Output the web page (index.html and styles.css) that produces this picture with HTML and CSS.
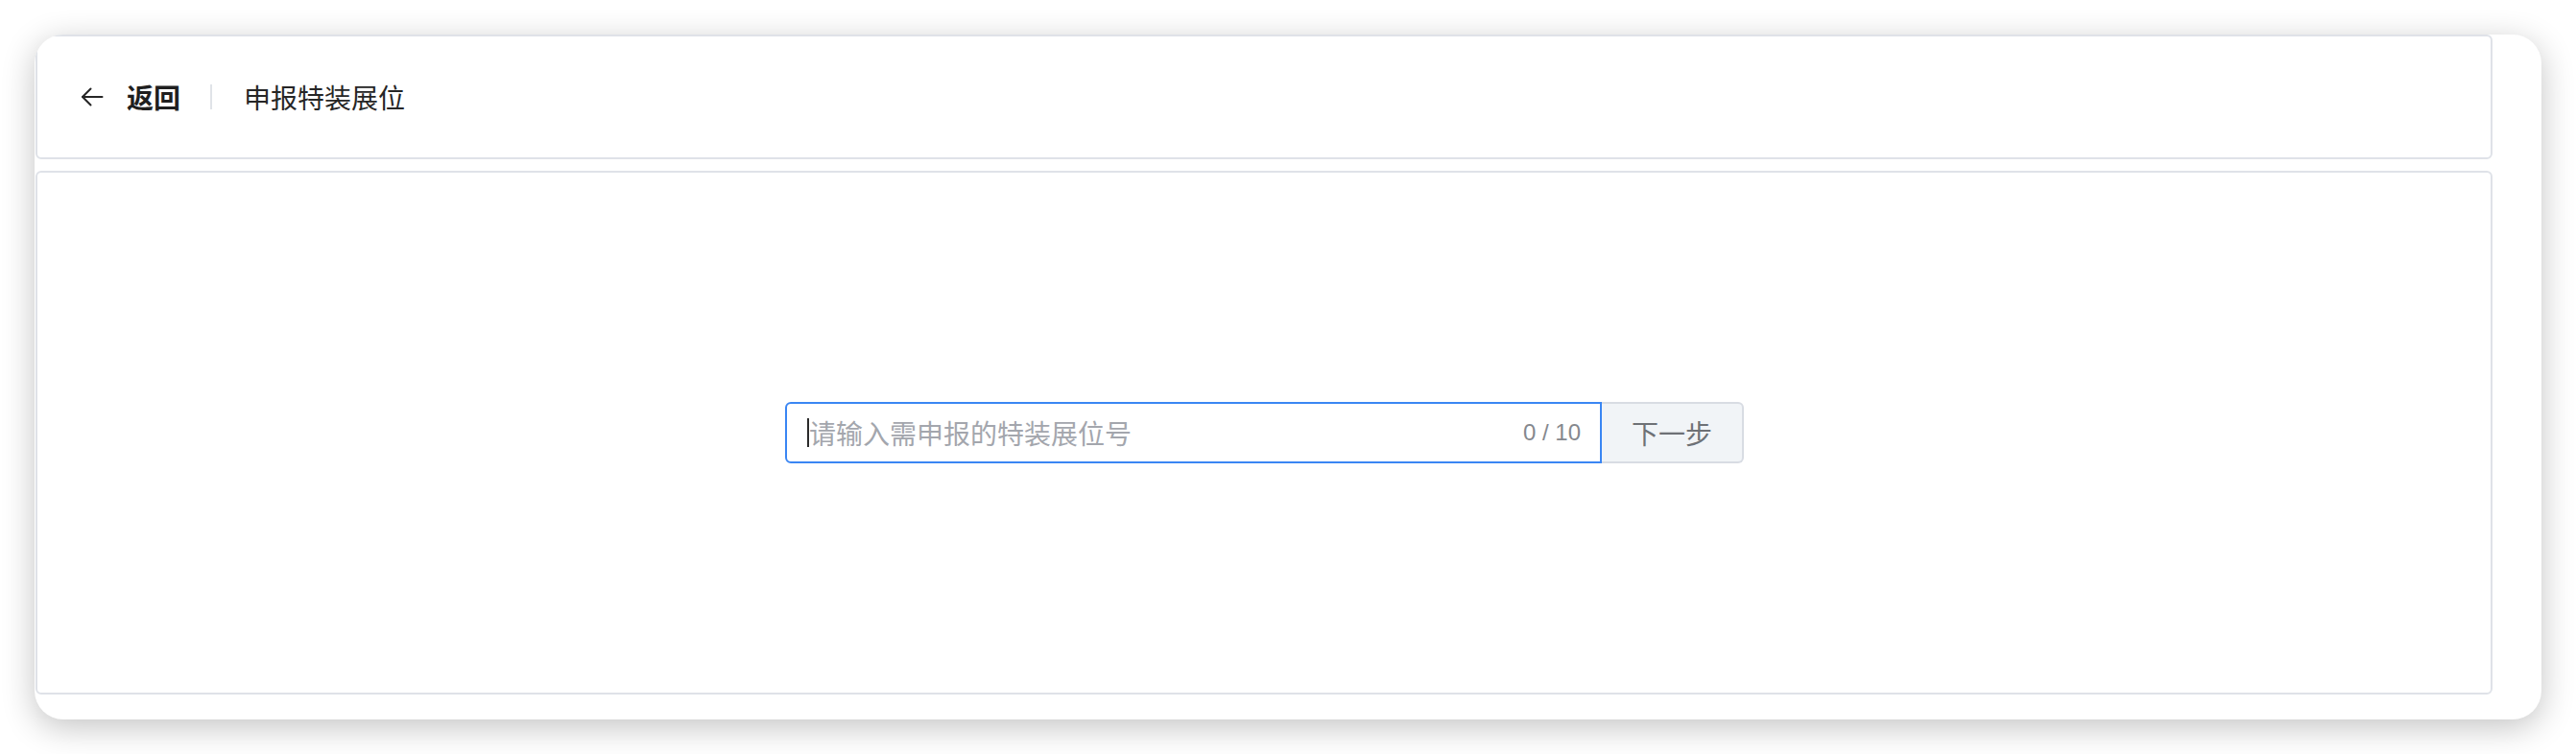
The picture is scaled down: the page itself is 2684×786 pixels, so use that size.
FILE: index.html
```html
<!DOCTYPE html>
<html lang="zh-CN">
<head>
<meta charset="utf-8">
<title>申报特装展位</title>
<link rel="stylesheet" href="styles.css">
</head>
<body>
<div class="window">
  <header class="header">
    <a class="back">
      <svg class="back-icon" width="24" height="20" viewBox="0 0 24 20" fill="none" stroke="#262626" stroke-width="2" stroke-linecap="round" stroke-linejoin="round">
        <path d="M22.5 10H2"/>
        <path d="M10.5 1.5L2 10l8.5 8.5"/>
      </svg>
      <span class="back-text">返回</span>
    </a>
    <span class="divider"></span>
    <span class="title">申报特装展位</span>
  </header>
  <main class="content">
    <div class="form-row">
      <div class="input-box">
        <span class="caret"></span>
        <span class="placeholder">请输入需申报的特装展位号</span>
        <span class="count">0 / 10</span>
      </div>
      <button class="next-btn">下一步</button>
    </div>
  </main>
</div>
</body>
</html>
```
FILE: styles.css
```css
* { box-sizing: border-box; }

html, body {
  margin: 0;
  background: #ffffff;
}

body {
  padding: 36px;
  font-family: "Noto Sans CJK SC", "Noto Sans", "Liberation Sans", sans-serif;
}

.window {
  width: 2612px;
  height: 714px;
  background: #ffffff;
  border-radius: 30px;
  box-shadow: 0 8px 34px rgba(0, 0, 0, 0.24);
  overflow: hidden;
  display: flex;
  flex-direction: column;
  gap: 12px;
  padding: 0 51px 26px 1px;
}

.header {
  height: 130px;
  flex: none;
  border: 2px solid #dfe2e8;
  border-radius: 6px;
  display: flex;
  align-items: center;
  padding-left: 45px;
}

.back {
  display: flex;
  align-items: center;
  gap: 24px;
  cursor: pointer;
}

.back-icon { display: block; }

.back-text {
  font-size: 28px;
  font-weight: 700;
  color: #1f1f1f;
  line-height: 40px;
}

.divider {
  width: 2px;
  height: 26px;
  background: #e0e3e8;
  margin: 0 33px 0 31px;
}

.title {
  font-size: 28px;
  color: #262626;
  line-height: 40px;
}

.content {
  flex: 1;
  border: 2px solid #dfe2e8;
  border-radius: 6px;
  display: flex;
  align-items: center;
  justify-content: center;
}

.form-row {
  display: flex;
  height: 64px;
  margin-left: 1px;
}

.input-box {
  width: 851px;
  height: 64px;
  border: 2px solid #3a86f3;
  border-radius: 6px 0 0 6px;
  display: flex;
  align-items: center;
  padding: 0 20px 0 21px;
}

.caret {
  width: 2px;
  height: 30px;
  background: #2b2b2b;
  flex: none;
}

.placeholder {
  font-size: 28px;
  color: #a3a6ad;
  line-height: 40px;
  flex: 1;
}

.count {
  font-family: "Liberation Sans", Arial, sans-serif;
  font-size: 24px;
  color: #85888e;
}

.next-btn {
  width: 148px;
  height: 64px;
  border: 2px solid #d8dce3;
  border-left: none;
  border-radius: 0 6px 6px 0;
  background: #f1f4f7;
  font-family: "Noto Sans CJK SC", "Noto Sans", sans-serif;
  font-size: 28px;
  color: #6e7176;
  padding: 0;
  cursor: pointer;
}
```
